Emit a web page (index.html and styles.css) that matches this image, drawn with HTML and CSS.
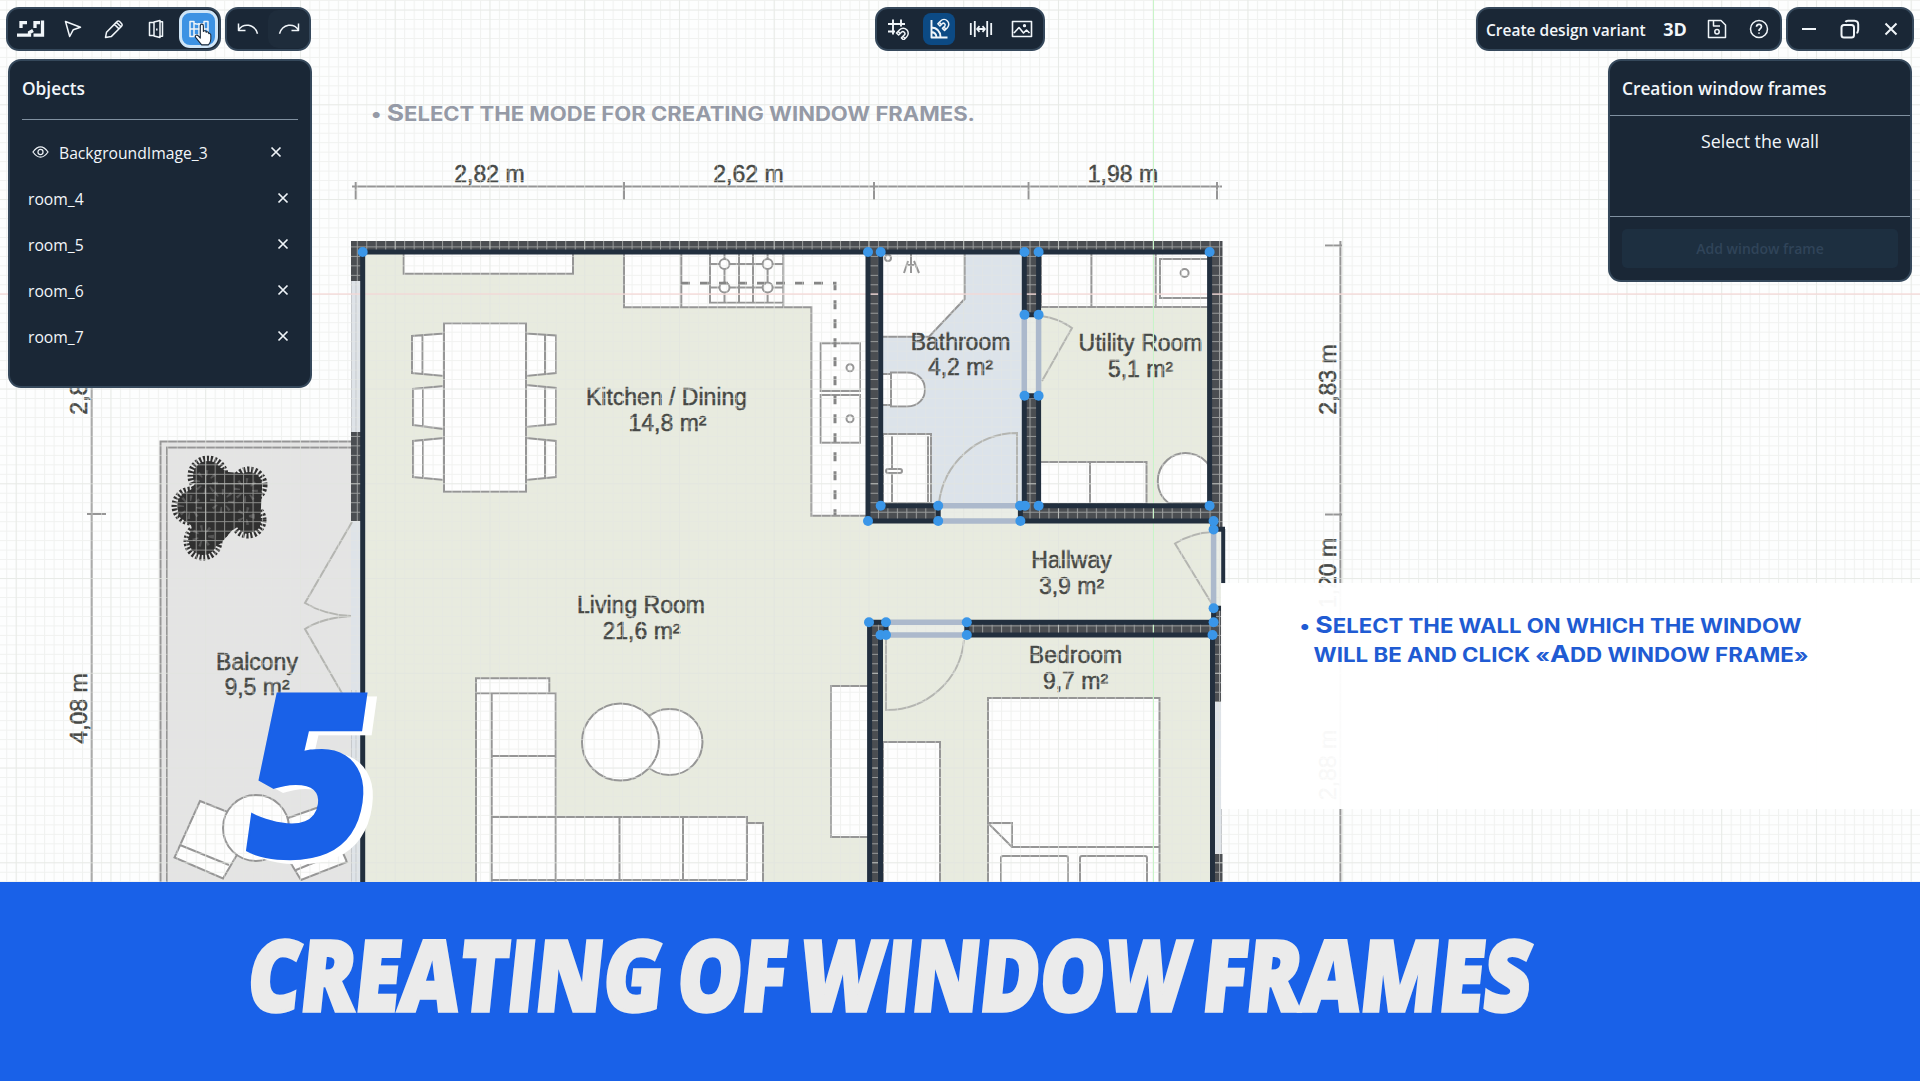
FILE: index.html
```html
<!DOCTYPE html>
<html lang="en">
<head>
<meta charset="utf-8">
<title>Creating of window frames</title>
<link rel="stylesheet" href="styles.css">
</head>
<body>
<div class="stage">
<svg class="canvas" width="1920" height="882" viewBox="0 0 1920 882">
  <defs>
    <pattern id="minor" x="15.7" y="9.55" width="9.475" height="9.475" patternUnits="userSpaceOnUse"><path class="grid-minor" d="M.5 0V9.475M0 .5H9.475"/></pattern>
    <pattern id="major" x="15.7" y="9.55" width="94.75" height="94.75" patternUnits="userSpaceOnUse"><path class="grid-major" d="M.5 0V94.75M0 .5H94.75"/></pattern>
  </defs>
  <rect width="1920" height="882" fill="#fdfefe"/>

  <!-- floors -->
  <path class="line" fill="#e4e4e4" d="M351 441.5H160.5V890H351"/>
  <path class="line" fill="#e4e4e4" d="M351 447.5H167V890H351"/>
  <rect x="361" y="250" width="852" height="640" fill="#e8ebdf"/>
  <rect x="881" y="252" width="144" height="269" fill="#dce3ea"/>

  <!-- wall bodies -->
  <g class="wall">
    <path d="M351 241H1222.500V252H351zM351 241H361V281H351zM351 432H361V521H351zM1210 241H1222.500V530H1210zM868 252H881V520H868zM1024 252H1039V315H1024zM1024 396H1039V506H1024zM868 506H938V521H868zM1020 506H1222V521H1020zM868 622H886V635H868zM967 622H1213V635H967zM869 622H881V882H869zM1213 610H1222.500V702H1213zM1213 854H1222.500V882H1213z"/>
  </g>
  <g fill="#dee3e8"><path d="M351 281H361V432H351zM351 521H361V882H351zM1213 702H1222V854H1213z"/></g>
  <path class="line thin" d="M351.500 281V432M356 281V432M351.500 690V882M356 690V882M1221.500 702V854"/>
  <path fill="#eaede6" d="M1026 317H1037V394H1026zM940 508H1019V519H940zM888 624H965V633H888zM1215 532H1221V606H1215z"/>

  <!-- living room and kitchen furniture -->
  <g class="line white">
    <path d="M403.700 252V273.700H573V252M624 252V307.300H811.400V515.700H868V252M681.300 252V307M710 252V302.700H783.300V252M783.300 302V307M739 252V302M753 252V302M710 264H783M710 287.500H783M724.500 252V302M767.600 252V302"/>
    <circle cx="724.500" cy="264" r="5"/><circle cx="767.600" cy="264" r="5"/><circle cx="724.500" cy="287.500" r="5"/><circle cx="767.600" cy="287.500" r="5"/>
    <rect x="820.700" y="343.300" width="39.300" height="47.700"/><rect x="820.700" y="395" width="39.300" height="47.700"/>
    <circle cx="850" cy="367.700" r="3.500"/><circle cx="850" cy="418.700" r="3.500"/>
    <path class="dash" fill="none" d="M681 283.300H835V515"/>
    <path d="M444 333.500L412 336V373L444 376zM422.500 335V374M444 386L413 389V425L444 429zM423 388V427M444 438L413 441V477L444 480zM423 440V478"/>
    <path d="M526 333.500L556 335.500V373L526 376zM545 335V374M526 385L556 388V424L526 427zM545 387V425M526 438L556 441V477L526 480zM545 440V478"/>
    <rect x="444" y="323.300" width="82" height="168.400"/>
    <circle cx="669.500" cy="742" r="33"/><circle cx="620.500" cy="742" r="38.500"/>
    <path d="M476 678.300H549.300V693.300H555.700V817H747V823H763V890H476zM476 693.300H550M491.700 693V882M491.700 756H555.700M491.700 817H555.700V882M619.500 817V880M683 817V880M747 817V880M491 880H747"/>
    <path d="M868 686H831V837H868"/>
  </g>

  <!-- bathroom -->
  <g class="line white">
    <path d="M881 252H964.600V299L929 336.700H881z"/>
    <path fill="none" d="M911 254V264M908 261L904 273M911 266V273M914 261L919 273M908 265H914"/><circle cx="888" cy="258" r="3"/>
    <rect x="881" y="374" width="10" height="31"/><path d="M891 372.500H907C931 372.500 931 406.500 907 406.500H891z"/>
    <path d="M883 434H931V503H883zM892 436V503M928 436V503"/><rect x="886" y="469" width="16" height="4" rx="2"/>
    <path class="door" fill="none" d="M1017 503V433A79 79 0 0 0 939 503"/>
  </g>

  <!-- utility room, hallway -->
  <g class="line white">
    <path d="M1041 252H1210V307H1041zM1091.400 252V307M1155.700 252V307"/>
    <rect x="1160" y="259" width="50" height="39"/><circle cx="1184.600" cy="273" r="4"/>
    <path d="M1039 504V462H1146.500V504zM1090 462V504"/>
    <path d="M1210 467A28 28 0 1 0 1168.400 503H1210z"/>
    <path class="door" fill="none" d="M1042 381L1072 328Q1058 318 1041 316M1212 604L1175 543.500Q1192 533 1212 532"/>
  </g>

  <!-- bedroom -->
  <g class="line white">
    <path d="M883 742H940V890H883zM988 890V698H1159.500V890z"/>
    <path fill="none" d="M988 823H1012V847H1159M988 823L1012 847"/>
    <rect x="1001" y="856" width="67" height="40" rx="2"/><rect x="1080" y="856" width="67" height="40" rx="2"/>
    <path class="door" fill="none" d="M886 640V710A77 77 0 0 0 964 640"/>
  </g>

  <!-- balcony -->
  <g class="line white">
    <path class="door" fill="none" d="M352 522L305 603Q325 615 351 616Q322 618 305 629L343 695"/>
    <path d="M200 801L233 814L251 831L223 878.500L174.500 857.500zM180 845L229 865"/>
    <path d="M288 818L322 806L347 862L301 880L290 862zM296 870L342 851"/>
    <circle cx="256" cy="828" r="33"/>
  </g>
  <path fill="#303030" d="M196 470L210 462L228 472L252 474L262 486L260 528L246 534L236 526L220 544L200 554L188 540L192 526L178 516L182 494L194 488z"/>
  <g class="leaf">
    <circle cx="208" cy="476" r="15"/><circle cx="249" cy="485" r="13"/><circle cx="191" cy="506" r="14"/><circle cx="225" cy="503" r="20"/><circle cx="248" cy="520" r="13"/><circle cx="203" cy="541" r="14"/><circle cx="213" cy="526" r="12"/>
  </g>
  <g class="leaf-tone">
    <circle cx="206" cy="482" r="9"/><circle cx="246" cy="490" r="9"/><circle cx="190" cy="507" r="9"/><circle cx="222" cy="501" r="9"/><circle cx="203" cy="536" r="8"/><circle cx="246" cy="516" r="6"/>
  </g>

  <!-- dimensions -->
  <path class="line" fill="none" d="M352 186.500H1222M355.700 182V200M624 182V200M874 182V200M1028.600 182V200M1217 182V200M91.700 380V882M87 514H106M1340.400 241V882M1325 245.500H1342M1325 514.500H1342"/>
  <g class="label">
    <text x="489.500" y="181.500">2,82 m</text><text x="748.500" y="181.500">2,62 m</text><text x="1123" y="181.500">1,98 m</text>
    <text x="666.500" y="404.500">Kitchen / Dining</text><text x="667.500" y="430.500">14,8 m²</text>
    <text x="641" y="613">Living Room</text><text x="641.500" y="638.500">21,6 m²</text>
    <text x="960.500" y="349.500">Bathroom</text><text x="960.500" y="375">4,2 m²</text>
    <text x="1140.500" y="351">Utility Room</text><text x="1140.500" y="376.500">5,1 m²</text>
    <text x="1071.500" y="567.500">Hallway</text><text x="1071.500" y="593.500">3,9 m²</text>
    <text x="1075.500" y="662.500">Bedroom</text><text x="1075.500" y="688.500">9,7 m²</text>
    <text x="257" y="669.500">Balcony</text><text x="257" y="695">9,5 m²</text>
    <text transform="translate(87 708.500) rotate(-90)">4,08 m</text>
    <text transform="translate(87 379.500) rotate(-90)">2,83 m</text>
    <text transform="translate(1335.500 379.500) rotate(-90)">2,83 m</text>
    <text transform="translate(1335.500 573) rotate(-90)">1,20 m</text>
    <text transform="translate(1335.500 765) rotate(-90)">2,88 m</text>
  </g>

  <rect width="1920" height="882" fill="url(#minor)"/>
  <rect width="1920" height="882" fill="url(#major)"/>
  <path d="M0 294H1920" stroke="#f9d3d3"/>
  <path d="M1153.500 0V882" stroke="#c8f5c8"/>

  <!-- editable wall outlines -->
  <path class="edge" d="M362.700 882V252H868V521H938.200V505.700H880.700V252H1024.300V314.700H1038.600V252H1209.600V505.700H1038.600V395.700H1024.300V505.700H1020.400V521H1213.600V529.300H1225M1213.600 608.300H1222M1213.600 608.300V622.300H966.800V635H1212.500V882M869.600 882V622.300H886V635H880.500V882"/>
  <path stroke="#222f3e" stroke-width="4" d="M1223.200 529V584"/>
  <path class="opening" d="M1024.300 315V396M1038.600 315V396M938 505.700H1020M938 521H1020M886 622.300H967M886 635H967M1213.600 529V608"/>
  <g fill="#3a96e8">
    <circle cx="362.700" cy="252" r="5"/><circle cx="868" cy="252" r="5"/><circle cx="880.700" cy="252" r="5"/><circle cx="1024.500" cy="252" r="5"/><circle cx="1038.600" cy="252" r="5"/><circle cx="1209.600" cy="252" r="5"/>
    <circle cx="1024.500" cy="314.700" r="5"/><circle cx="1038.600" cy="314.700" r="5"/><circle cx="1024.500" cy="395.700" r="5"/><circle cx="1038.600" cy="395.700" r="5"/>
    <circle cx="880.700" cy="505.700" r="5"/><circle cx="938.200" cy="505.700" r="5"/><circle cx="1020" cy="505.700" r="5"/><circle cx="1025" cy="505.700" r="5"/><circle cx="1038.600" cy="505.700" r="5"/><circle cx="1209.600" cy="505.700" r="5"/>
    <circle cx="868" cy="521" r="5"/><circle cx="938.200" cy="521" r="5"/><circle cx="1020.400" cy="521" r="5"/><circle cx="1213.600" cy="521" r="5"/><circle cx="1213.600" cy="529.500" r="5"/>
    <circle cx="1213.600" cy="608.300" r="5"/><circle cx="1213.600" cy="622.300" r="5"/><circle cx="1212.500" cy="635" r="5"/>
    <circle cx="869" cy="622.300" r="5"/><circle cx="886" cy="622.300" r="5"/><circle cx="966.800" cy="622.300" r="5"/><circle cx="880.500" cy="635" r="5"/><circle cx="886" cy="635" r="5"/><circle cx="966.800" cy="635" r="5"/>
  </g>

  <!-- slide captions -->
  <rect x="1221" y="583" width="699" height="226" fill="#fff" fill-opacity=".96"/>
  <g class="caption past"><text x="371" y="121.300" textLength="604" lengthAdjust="spacingAndGlyphs">• <tspan class="cap">S</tspan>ELECT THE MODE FOR CREATING WINDOW FRAMES.</text></g>
  <g class="caption">
    <text x="1299.500" y="633" textLength="502" lengthAdjust="spacingAndGlyphs">• <tspan class="cap">S</tspan>ELECT THE WALL ON WHICH THE WINDOW</text>
    <text x="1313.500" y="661.700" textLength="495" lengthAdjust="spacingAndGlyphs">WILL BE AND CLICK «<tspan class="cap">A</tspan>DD WINDOW FRAME»</text>
  </g>
  <g class="number" transform="translate(236 857) skewX(-8)">
    <text class="number-back" x="10" y="4" textLength="128" lengthAdjust="spacingAndGlyphs">5</text>
    <text x="0" y="0" textLength="128" lengthAdjust="spacingAndGlyphs">5</text>
  </g>
</svg>

<header class="topbar">
  <div class="cluster">
    <nav class="pill main-tools">
      <span class="tool"><svg viewBox="0 0 28 20" width="28" height="20"><path stroke-width="3.300" stroke-linejoin="miter" d="M10 3.700H4V9M1 14.500V16.200H12.500V13.500L16 11.500M24.500 3.700M23 3.700H18V9M16.500 16.200H25.500V1.500"/></svg></span>
      <span class="tool"><svg viewBox="0 0 20 20" width="20" height="20"><path d="M2.500 2.500L17.500 8.300L10.300 10.700L6.700 17.500z"/></svg></span>
      <span class="tool"><svg viewBox="0 0 20 20" width="20" height="20"><path d="M1.500 18.500L2.500 13.300L13 2.600Q14.200 1.300 15.600 2.500L17.700 4.700Q18.800 6 17.600 7.200L7.200 17.600zM10.300 5.300L15 9.900M12.300 3.300L17 7.900"/></svg></span>
      <span class="tool"><svg viewBox="0 0 20 20" width="20" height="20"><path d="M8 3.500H3.500V16.500H8M8 3L14 1.500V18.500L8 17zM14 2.700H16.500V17.300H14M10.800 9.500V11.500"/></svg></span>
      <span class="tool active"><svg viewBox="0 0 22 20" width="22" height="20"><path d="M2 2.500H6V17.500H2zM16 2.500H20V17.500H16zM6 4.500Q11 6 16 4.500M11 4V17M6 16H16M2 10H20"/></svg>
        <svg class="cursor" viewBox="0 0 20 26" width="18" height="25"><path d="M7 14V3.500Q7 1.500 8.700 1.500T10.400 3.500V9.500Q11 8.500 12.300 8.900T13.500 10.500Q14.500 9.600 15.600 10.300T16.400 12Q18.700 11.500 18.700 14V18Q18.700 22 16 24.500H8.500L2 16.500Q.8 14.800 2.200 14T4.800 14.600L7 17z"/></svg>
      </span>
    </nav>
    <nav class="pill history">
      <span class="tool"><svg viewBox="0 0 22 20" width="22" height="20"><path d="M1.500 4.500V11.500H8.500M1.500 11Q5 5.500 11.500 6.300Q18.500 7.500 20.500 14.800"/></svg></span>
      <span class="tool shade"><svg viewBox="0 0 22 20" width="22" height="20"><path d="M20.500 4.500V11.500H13.500M20.500 11Q17 5.500 10.500 6.300Q3.500 7.500 1.500 14.800"/></svg></span>
    </nav>
  </div>
  <nav class="pill snap">
    <span class="tool"><svg viewBox="0 0 22 22" width="22" height="22"><path stroke-width="1.900" d="M6 1.500V16.500M14 1.500V8.500M1 6H18M1 13.500H8"/><g transform="rotate(45 15.500 16)"><path d="M10.500 19.500V15A5 5 0 0 1 20.500 15V19.500H17.500V15.500A2 2 0 0 0 13.500 15.500V19.500zM10.500 17.300H13.500M17.500 17.300H20.500"/></g></svg></span>
    <span class="tool chosen"><svg viewBox="0 0 22 22" width="22" height="22"><path stroke-width="1.900" d="M3.500 2V19.500H19.500M3.500 9.500Q12 10 12.500 19M3.500 14Q8 14.500 8.500 19"/><g transform="rotate(45 15.500 6.500)"><path d="M11 10V6A4.700 4.700 0 0 1 20.500 6V10H17.500V6.500A1.800 1.800 0 0 0 14 6.500V10zM11 8H14M17.500 8H20.500"/></g></svg></span>
    <span class="tool"><svg viewBox="0 0 24 20" width="24" height="20"><path stroke-width="1.800" d="M1.800 4V16M5.800 2V18M18.200 2V18M22.200 4V16M8 10H16M10.500 7.200L8 10L10.500 12.800M13.500 7.200L16 10L13.500 12.800"/></svg></span>
    <span class="tool"><svg viewBox="0 0 22 20" width="22" height="20"><path stroke-width="1.600" d="M1.500 2.500H20.500V17.500H1.500zM3 14L8 8.500L12.500 14L15.500 11L18.500 14"/><circle cx="13.500" cy="6.700" r=".9"/></svg></span>
  </nav>
  <div class="cluster end">
    <nav class="pill project">
      <span class="variant">Create design variant</span>
      <span class="mode">3D</span>
      <span class="tool"><svg viewBox="0 0 20 20" width="20" height="20"><path d="M1.500 1.500H14L18.500 6V18.500H1.500zM6.500 1.500V7H13"/><circle cx="10" cy="12.800" r="2.200"/></svg></span>
      <span class="tool"><svg viewBox="0 0 20 20" width="20" height="20"><circle cx="10" cy="10" r="8.500"/><path stroke-width="1.700" d="M7.500 7.800Q7.700 5.400 10 5.400T12.500 7.600Q12.500 8.900 11.200 9.700T10 12M10 13.600V14.800"/></svg></span>
    </nav>
    <nav class="pill system">
      <span class="tool"><svg viewBox="0 0 20 20" width="20" height="20"><path stroke-width="2" d="M3 10H17"/></svg></span>
      <span class="tool"><svg viewBox="0 0 20 20" width="20" height="20"><rect x="1.500" y="6" width="12.500" height="12.500" rx="2.500" stroke-width="2"/><path stroke-width="2" d="M5.500 3Q6 1.800 8 1.800H14.500Q18.200 2 18.200 5.500V11Q18 13.500 16.500 14"/></svg></span>
      <span class="tool"><svg viewBox="0 0 20 20" width="20" height="20"><path stroke-width="2" d="M4.500 4.500L15.500 15.500M15.500 4.500L4.500 15.500"/></svg></span>
    </nav>
  </div>
</header>

<main class="panels">
  <aside class="panel objects">
    <h2>Objects</h2>
    <ul>
      <li class="image"><svg class="eye" viewBox="0 0 18 14" width="17" height="14"><path d="M1 7Q5 1.500 9 1.500T17 7Q13 12.500 9 12.500T1 7z"/><circle cx="9" cy="7" r="2.700"/></svg><span>BackgroundImage_3</span><svg class="close" viewBox="0 0 12 12" width="12" height="12"><path d="M1.500 1.500L10.500 10.500M10.500 1.500L1.500 10.500"/></svg></li>
      <li><span>room_4</span><svg class="close" viewBox="0 0 12 12" width="12" height="12"><path d="M1.500 1.500L10.500 10.500M10.500 1.500L1.500 10.500"/></svg></li>
      <li><span>room_5</span><svg class="close" viewBox="0 0 12 12" width="12" height="12"><path d="M1.500 1.500L10.500 10.500M10.500 1.500L1.500 10.500"/></svg></li>
      <li><span>room_6</span><svg class="close" viewBox="0 0 12 12" width="12" height="12"><path d="M1.500 1.500L10.500 10.500M10.500 1.500L1.500 10.500"/></svg></li>
      <li><span>room_7</span><svg class="close" viewBox="0 0 12 12" width="12" height="12"><path d="M1.500 1.500L10.500 10.500M10.500 1.500L1.500 10.500"/></svg></li>
    </ul>
  </aside>
  <aside class="panel frames">
    <h2>Creation window frames</h2>
    <p>Select the wall</p>
    <div class="actions"><button disabled>Add window frame</button></div>
  </aside>
</main>

<footer class="banner">
  <svg width="1920" height="199" viewBox="0 0 1920 199"><text class="title" transform="translate(245 128.500) skewX(-6)" x="0" y="0" textLength="1283" lengthAdjust="spacingAndGlyphs">CREATING OF WINDOW FRAMES</text></svg>
</footer>
</div>
</body>
</html>
```
FILE: styles.css
```css
* { box-sizing: border-box; }
body { margin: 0; font-family: "Open Sans", "Noto Sans", sans-serif; color: #f2f6fa; }
.stage { position: relative; display: flex; flex-direction: column; width: 1920px; height: 1081px; overflow: hidden; }
.canvas { position: absolute; inset: 0 auto auto 0; }

.grid-minor { stroke: rgba(228, 231, 226, .52); fill: none; }
.grid-major { stroke: rgba(224, 227, 222, .5); fill: none; }
.wall { fill: #4b4e52; }
.line { stroke: #969696; stroke-width: 2; }
.thin { stroke: #c6c9cc; stroke-width: 1; }
.white { fill: #fefefe; }
.door { stroke: #b4b5b1; }
.dash { stroke: #858585; stroke-dasharray: 9 10; stroke-width: 3; }
.edge { fill: none; stroke: #222f3e; stroke-width: 5; }
.opening { stroke: #acb9cc; stroke-width: 5.5; }
.leaf { fill: #303030; stroke: #303030; stroke-width: 11; stroke-dasharray: 1.8 1.5; }
.leaf-tone { fill: none; stroke: #565656; stroke-width: 6; stroke-dasharray: 2 5; }
.label { font: 23px "Liberation Sans", sans-serif; fill: #464845; stroke: #464845; stroke-width: .5; text-anchor: middle; }
.caption { font: 700 19.5px "Inter", sans-serif; fill: #205bd3; }
.caption .cap { font-size: 23.5px; }
.caption.past { fill: #959aa6; }
.number { font: 800 229px "Open Sans", sans-serif; fill: #1961e8; stroke: #1961e8; stroke-width: 2; }
.number-back { fill: #fff; stroke: #fff; }

.topbar { position: relative; display: grid; grid-template-columns: 1fr auto 1fr; padding: 7px 6px 0; height: 51px; }
.cluster { display: flex; gap: 4px; }
.end { justify-content: flex-end; }
.pill { display: flex; align-items: center; height: 44px; padding: 0; background: #1a2736; border: 2px solid #35485b; border-radius: 13px; }
.main-tools { width: 215px; padding-left: 2px; }
.history { width: 86px; }
.snap { width: 170px; }
.system { width: 128px; }
.tool { display: flex; align-items: center; justify-content: center; width: 42px; height: 38px; border-radius: 10px; }
.tool svg { flex: none; fill: none; stroke: #f0f5f9; stroke-width: 1.5; stroke-linejoin: round; }
.history .tool, .snap .tool, .system .tool { flex: 1; }
.shade { background: #1e2c3b; }
.active { position: relative; width: 39px; margin: 0 1px 0 2px; background: #3d92e3; border: 3px solid #cfe5f7; border-radius: 11px; }
.tool .cursor { position: absolute; left: 12px; top: 9px; fill: #fff; stroke: #1a2736; stroke-width: 1.2; }
.snap .chosen { flex: 0 0 32px; height: 32px; margin: 0 5px; background: #0c4a84; border-radius: 8px; }
.project { width: 306px; padding: 0 0 0 8px; }
.variant { width: 168px; padding-top: 2px; font-size: 15.500px; font-weight: 600; white-space: nowrap; }
.mode { width: 42px; text-align: center; font-size: 18px; font-weight: 700; }

.panels { position: relative; display: flex; justify-content: space-between; align-items: flex-start; padding: 8px 8px 0; }
.panel { width: 304px; background: #1a2736; border: 2px solid #35485b; border-radius: 13px; }
.panel h2 { margin: 0; font-size: 17.300px; font-weight: 600; line-height: 24px; }
.objects { height: 329px; padding: 0 12px; }
.objects h2 { height: 59px; padding-top: 16px; border-bottom: 1px solid #8090a0; }
.objects ul { list-style: none; margin: 0; padding: 10px 9px 0 6px; }
.objects li { display: flex; align-items: center; height: 46px; font-size: 15.700px; }
.objects .image { padding: 0 7px 0 4px; }
.eye { margin: 0 10px 2px 0; fill: none; stroke: #eef3f7; stroke-width: 1.3; }
.close { margin: 0 0 3px auto; fill: none; stroke: #eef3f7; stroke-width: 1.7; }
.frames { height: 223px; }
.frames h2 { height: 55px; padding: 16px 12px 0; border-bottom: 1px solid #8090a0; }
.frames p { margin: 0; height: 101px; padding-top: 13px; text-align: center; font-size: 17.800px; line-height: 24px; border-bottom: 1px solid #8090a0; }
.actions { padding: 12px; }
.actions button { width: 276px; height: 39px; border: 0; border-radius: 5px; background: #1d2f40; color: #304459; font: 600 14px "Open Sans", sans-serif; }

.banner { position: relative; margin-top: auto; height: 199px; background: #1961e8; }
.banner svg { display: block; }
.title { font: 800 98px "Open Sans", sans-serif; fill: #ebebeb; stroke: #ebebeb; stroke-width: 3.5; word-spacing: -9px; }
```
